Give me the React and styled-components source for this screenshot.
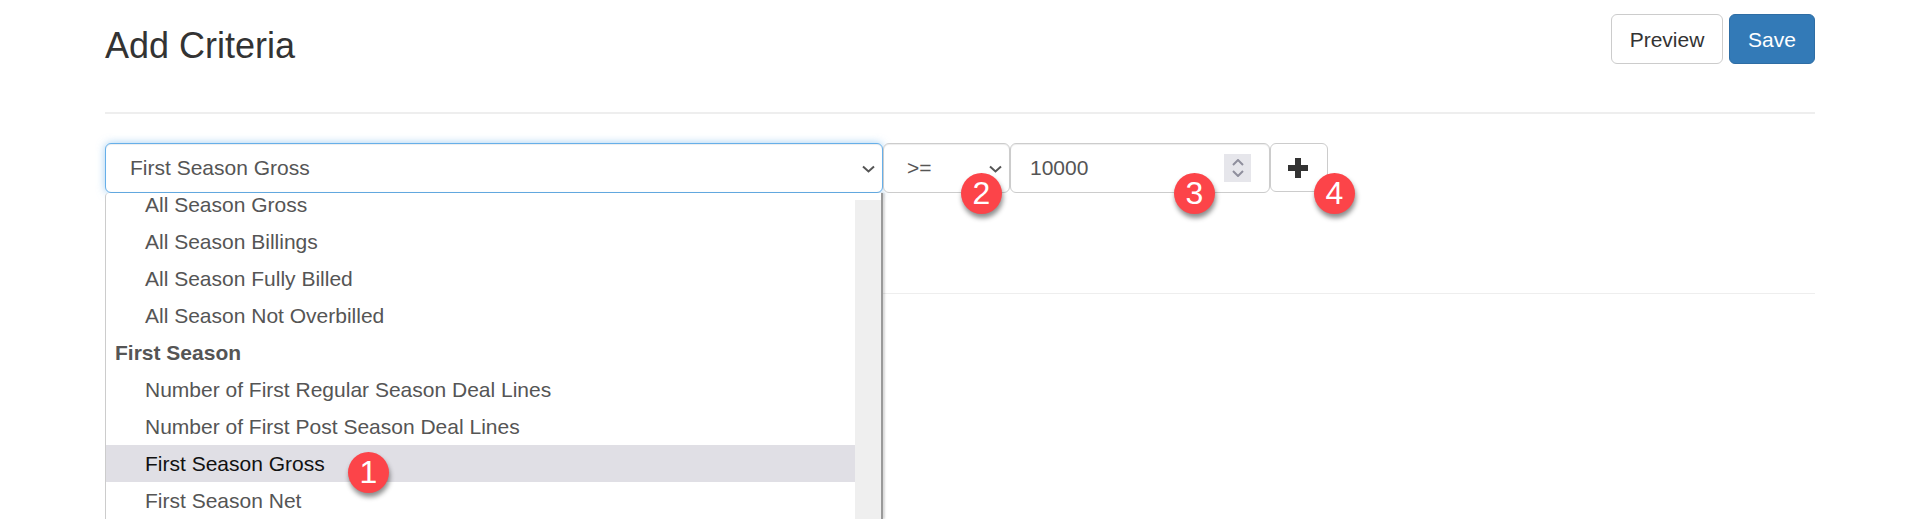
import React from "react";
import styled, { createGlobalStyle } from "styled-components";

const GlobalStyle = createGlobalStyle`
  html, body {
    margin: 0;
    height: 100%;
    overflow: hidden;
    background: #fff;
  }
  body {
    font-family: "Liberation Sans", Arial, sans-serif;
    font-size: 21px;
    color: #333;
  }
`;

const Page = styled.div`
  padding: 14px 105px 0;
`;

const Header = styled.div`
  display: flex;
  justify-content: space-between;
  align-items: flex-start;
  height: 98px;
  border-bottom: 2px solid #eeeeee;
`;

const Title = styled.h1`
  margin: 12px 0 0;
  font-size: 36px;
  font-weight: 400;
  line-height: 40px;
  color: #333;
`;

const Actions = styled.div`
  display: flex;
  gap: 6px;
`;

const Button = styled.button`
  height: 50px;
  width: ${(p) => p.$width}px;
  padding: 2px 0 0;
  font: inherit;
  border-radius: 6px;
  border: 1px solid ${(p) => (p.$primary ? "#2e6da4" : "#ccc")};
  background: ${(p) => (p.$primary ? "#337ab7" : "#fff")};
  color: ${(p) => (p.$primary ? "#fff" : "#333")};
`;

const CriteriaBlock = styled.div`
  position: relative;
  height: 150px;
  padding-top: 29px;
  border-bottom: 1px solid #eeeeee;
`;

const Row = styled.div`
  display: flex;
  align-items: flex-start;
  width: 1224px;
`;

const Field = styled.div`
  position: relative;
  box-sizing: border-box;
  display: flex;
  align-items: center;
  height: 50px;
  flex: none;
  width: ${(p) => p.$width}px;
  padding-left: ${(p) => p.$pad}px;
  border: 1px solid ${(p) => (p.$focus ? "#66afe9" : "#ccc")};
  border-radius: 6px;
  color: #555;
  background: #fff;
  box-shadow: ${(p) =>
    p.$focus
      ? "inset 0 1px 1px rgba(0,0,0,.075), 0 0 8px rgba(102,175,233,.6)"
      : "inset 0 1px 1px rgba(0,0,0,.075)"};
`;

const Caret = styled.svg`
  position: absolute;
  right: 7px;
  top: 21px;
  width: 13px;
  height: 8px;
  fill: none;
  stroke: #555;
  stroke-width: 2;
`;

const Spinner = styled.div`
  position: absolute;
  right: 18px;
  top: 10px;
  width: 27px;
  height: 28px;
  display: flex;
  flex-direction: column;
  align-items: center;
  justify-content: center;
  gap: 4px;
  background: #e6e6eb;
`;

const SpinArrow = styled.svg`
  width: 12px;
  height: 7px;
  fill: none;
  stroke: #8f8f9d;
  stroke-width: 2;
`;

const PlusButton = styled.button`
  box-sizing: border-box;
  width: 58px;
  height: 49px;
  flex: none;
  padding: 1px 2px 0 0;
  display: flex;
  align-items: center;
  justify-content: center;
  border: 1px solid #ccc;
  border-radius: 6px;
  background: #fff;
`;

const Menu = styled.div`
  position: absolute;
  left: 0;
  top: 79px;
  box-sizing: border-box;
  width: 778px;
  height: 326px;
  overflow: hidden;
  background: #fff;
  border-left: 1px solid #ccc;
  border-right: 2px solid #999;
  box-shadow: 2px 0 2px rgba(0, 0, 0, 0.15);
  border-top-left-radius: 4px;
  display: flex;
`;

const List = styled.div`
  flex: 1;
  margin-top: -7px;
`;

const Scrollbar = styled.div`
  flex: none;
  width: 26px;
  margin-top: 7px;
  background: #efefef;
`;

const Item = styled.div`
  height: 37px;
  line-height: 37px;
  padding-left: ${(p) => (p.$group ? 9 : 39)}px;
  font-weight: ${(p) => (p.$group ? 700 : 400)};
  color: ${(p) => (p.$active ? "#111" : "#555")};
  background: ${(p) => (p.$active ? "#e0dfe5" : "transparent")};
  white-space: nowrap;
`;

const Badge = styled.div`
  position: absolute;
  width: 41px;
  height: 41px;
  left: ${(p) => p.$x}px;
  top: ${(p) => p.$y}px;
  border-radius: 50%;
  background: #fc4449;
  color: #fff;
  font-size: 32px;
  line-height: 41px;
  text-align: center;
  box-shadow: 1px 4px 5px rgba(0, 0, 0, 0.45);
`;

const items = [
  { label: "All Season Gross" },
  { label: "All Season Billings" },
  { label: "All Season Fully Billed" },
  { label: "All Season Not Overbilled" },
  { label: "First Season", group: true },
  { label: "Number of First Regular Season Deal Lines" },
  { label: "Number of First Post Season Deal Lines" },
  { label: "First Season Gross", active: true },
  { label: "First Season Net" },
];

const badges = [
  { n: 1, x: 243, y: 338 },
  { n: 2, x: 856, y: 59 },
  { n: 3, x: 1069, y: 59 },
  { n: 4, x: 1209, y: 59 },
];

function Chevron() {
  return (
    <Caret viewBox="0 0 13 8">
      <path d="M1 1.5l5.5 5 5.5-5" />
    </Caret>
  );
}

export default function App() {
  return (
    <Page>
      <GlobalStyle />
      <Header>
        <Title>Add Criteria</Title>
        <Actions>
          <Button $width={112}>Preview</Button>
          <Button $width={86} $primary>
            Save
          </Button>
        </Actions>
      </Header>
      <CriteriaBlock>
        <Row>
          <Field $width={778} $pad={24} $focus>
            First Season Gross
            <Chevron />
          </Field>
          <Field $width={127} $pad={23}>
            &gt;=
            <Chevron />
          </Field>
          <Field $width={260} $pad={19}>
            10000
            <Spinner>
              <SpinArrow viewBox="0 0 12 7">
                <path d="M1 6l5-5 5 5" />
              </SpinArrow>
              <SpinArrow viewBox="0 0 12 7">
                <path d="M1 1l5 5 5-5" />
              </SpinArrow>
            </Spinner>
          </Field>
          <PlusButton>
            <svg width="20" height="20" viewBox="0 0 20 20">
              <path d="M7 0h6v7h7v6h-7v7H7v-7H0V7h7z" fill="#333" />
            </svg>
          </PlusButton>
        </Row>
        <Menu>
          <List>
            {items.map((item) => (
              <Item key={item.label} $group={item.group} $active={item.active}>
                {item.label}
              </Item>
            ))}
          </List>
          <Scrollbar />
        </Menu>
        {badges.map((b) => (
          <Badge key={b.n} $x={b.x} $y={b.y}>
            {b.n}
          </Badge>
        ))}
      </CriteriaBlock>
    </Page>
  );
}
